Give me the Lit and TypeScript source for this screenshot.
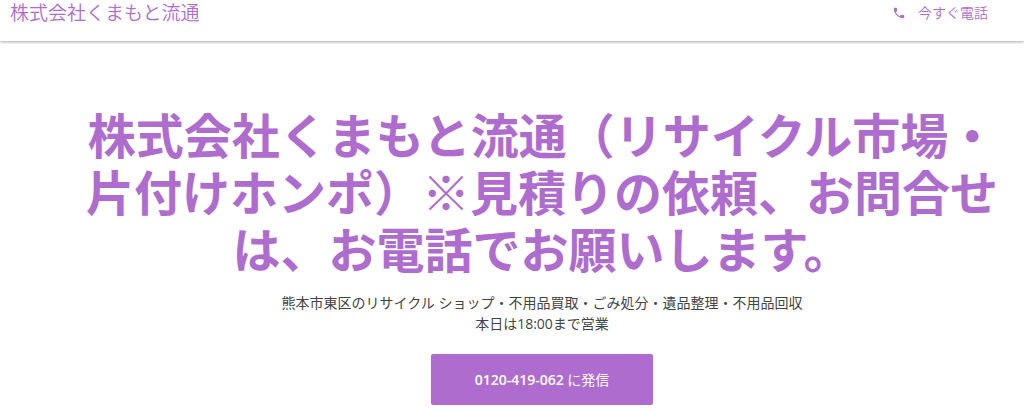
import { LitElement, html, css } from "lit";
import { customElement } from "lit/decorators.js";

@customElement("app-root")
export class AppRoot extends LitElement {
  static styles = css`
    :host {
      display: block;
      font-family: "Open Sans", "Noto Sans CJK JP", sans-serif;
      color: #444;
      background: #fff;
    }
    a {
      text-decoration: none;
    }
    .bar {
      display: flex;
      justify-content: space-between;
      align-items: center;
      padding: 0 36px 15px 10px;
      box-shadow: 0 1px 3px rgba(0, 0, 0, 0.35);
      color: #ae6dce;
      font-weight: 350;
    }
    .brand {
      color: inherit;
      font-size: 19px;
      line-height: 26px;
    }
    .call {
      display: flex;
      align-items: center;
      gap: 12px;
      color: inherit;
      font-size: 14px;
      line-height: 26px;
    }
    .call svg {
      width: 14px;
      height: 14px;
      fill: currentColor;
    }
    .hero {
      display: flex;
      flex-direction: column;
      align-items: center;
      padding: 66px 24px 6px 84px;
      text-align: center;
    }
    h1 {
      margin: 0;
      color: #ae6dce;
      font-size: 48px;
      font-weight: 700;
      line-height: 57px;
    }
    p {
      margin: 0;
      font-size: 14px;
      line-height: 21px;
    }
    .about {
      margin-top: 14px;
    }
    .action {
      margin-top: 20px;
      padding: 0 44px;
      border-radius: 2px;
      background: #ae6dce;
      color: #fff;
      font-size: 14px;
      line-height: 51px;
    }
    .number {
      font-weight: 600;
    }
  `;

  render() {
    return html`
      <header class="bar">
        <a class="brand" href="#">株式会社くまもと流通</a>
        <a class="call" href="tel:0120419062">
          <svg viewBox="0 0 24 24" aria-hidden="true">
            <path
              d="M6.62 10.79c1.44 2.83 3.76 5.14 6.59 6.59l2.2-2.2c.27-.27.67-.36 1.02-.24 1.12.37 2.33.57 3.57.57.55 0 1 .45 1 1V20c0 .55-.45 1-1 1-9.39 0-17-7.61-17-17 0-.55.45-1 1-1h3.5c.55 0 1 .45 1 1 0 1.25.2 2.45.57 3.57.11.35.03.74-.25 1.02l-2.2 2.2z"
            />
          </svg>
          <span>今すぐ電話</span>
        </a>
      </header>
      <main class="hero">
        <h1>株式会社くまもと流通（リサイクル市場・片付けホンポ）※見積りの依頼、お問合せは、お電話でお願いします。</h1>
        <p class="about">熊本市東区のリサイクル ショップ・不用品買取・ごみ処分・遺品整理・不用品回収</p>
        <p>本日は18:00まで営業</p>
        <a class="action" href="tel:0120419062"><span class="number">0120-419-062</span> に発信</a>
      </main>
    `;
  }
}
